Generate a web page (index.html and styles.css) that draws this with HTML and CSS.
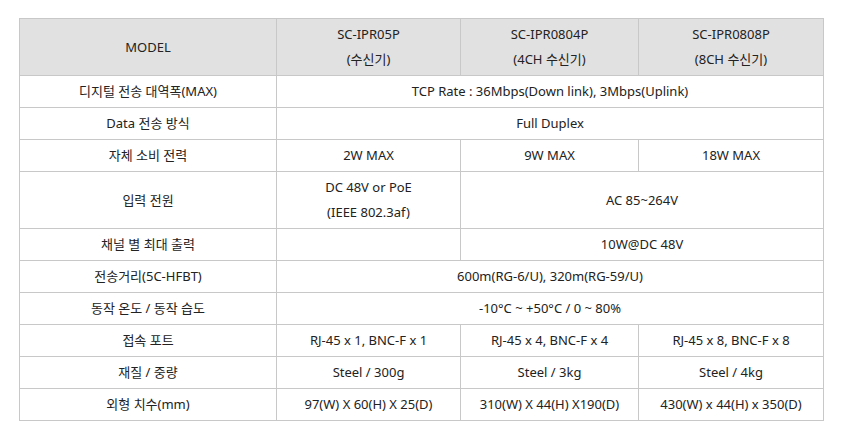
FILE: index.html
```html
<!DOCTYPE html>
<html lang="ko">
<head>
<meta charset="utf-8">
<title>Spec</title>
<link rel="stylesheet" href="styles.css">
</head>
<body>
<table class="spec">
  <colgroup>
    <col class="c1"><col class="c2"><col class="c3"><col class="c4">
  </colgroup>
  <thead>
    <tr class="head">
      <th>MODEL</th>
      <th>SC-IPR05P<br>(수신기)</th>
      <th>SC-IPR0804P<br>(4CH 수신기)</th>
      <th>SC-IPR0808P<br>(8CH 수신기)</th>
    </tr>
  </thead>
  <tbody>
    <tr><td>디지털 전송 대역폭(MAX)</td><td colspan="3">TCP Rate : 36Mbps(Down link), 3Mbps(Uplink)</td></tr>
    <tr><td>Data 전송 방식</td><td colspan="3">Full Duplex</td></tr>
    <tr><td>자체 소비 전력</td><td>2W MAX</td><td>9W MAX</td><td>18W MAX</td></tr>
    <tr><td>입력 전원</td><td>DC 48V or PoE<br>(IEEE 802.3af)</td><td colspan="2">AC 85~264V</td></tr>
    <tr><td>채널 별 최대 출력</td><td></td><td colspan="2">10W@DC 48V</td></tr>
    <tr><td>전송거리(5C-HFBT)</td><td colspan="3">600m(RG-6/U), 320m(RG-59/U)</td></tr>
    <tr><td>동작 온도 / 동작 습도</td><td colspan="3">-10°C ~ +50°C / 0 ~ 80%</td></tr>
    <tr><td>접속 포트</td><td>RJ-45 x 1, BNC-F x 1</td><td>RJ-45 x 4, BNC-F x 4</td><td>RJ-45 x 8, BNC-F x 8</td></tr>
    <tr><td>재질 / 중량</td><td>Steel / 300g</td><td>Steel / 3kg</td><td>Steel / 4kg</td></tr>
    <tr><td>외형 치수(mm)</td><td>97(W) X 60(H) X 25(D)</td><td>310(W) X 44(H) X190(D)</td><td>430(W) x 44(H) x 350(D)</td></tr>
  </tbody>
</table>
</body>
</html>
```

FILE: styles.css
```css
html, body {
  margin: 0;
  padding: 0;
  background: #ffffff;
}
body {
  padding: 18px 0 0 19px;
  font-family: "Noto Sans", "Noto Sans CJK KR", sans-serif;
  font-size: 13px;
  color: #222222;
}
.spec {
  border-collapse: collapse;
  table-layout: fixed;
  width: 804px;
}
.c1 { width: 257px; }
.c2 { width: 184px; }
.c3 { width: 178px; }
.c4 { width: 185px; }
.spec th,
.spec td {
  border: 1px solid #c8c8c8;
  padding: 3px 0;
  line-height: 25px;
  height: 25px;
  text-align: center;
  vertical-align: middle;
  font-weight: normal;
  white-space: nowrap;
}
.head th {
  background: #e1e1e1;
}
```
